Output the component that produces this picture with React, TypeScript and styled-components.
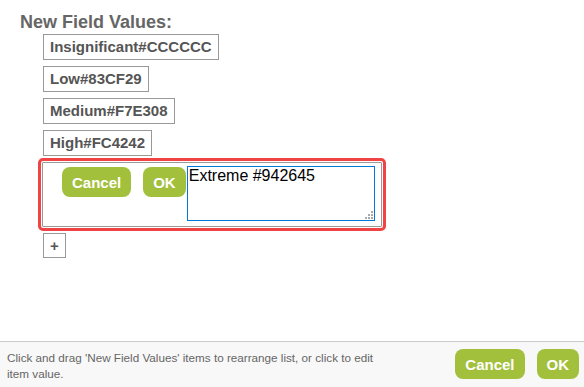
import React, { useState } from "react";
import styled, { createGlobalStyle } from "styled-components";

const GlobalStyle = createGlobalStyle`
  html, body { margin: 0; padding: 0; background: #fff; }
  body { font-family: "Liberation Sans", Arial, sans-serif; }
  * { box-sizing: border-box; }
`;

const Page = styled.div`
  display: flex;
  flex-direction: column;
  height: 100vh;
`;

const Main = styled.div`
  flex: 1;
  padding: 11px 0 0 20px;
`;

const Heading = styled.div`
  font-size: 18px;
  font-weight: bold;
  color: #666;
  line-height: 22px;
`;

const List = styled.div`
  display: flex;
  flex-direction: column;
  align-items: flex-start;
  padding: 1px 0 0 23px;
`;

const Item = styled.div`
  border: 1px solid #999;
  padding: 3px 6px;
  font-size: 15px;
  line-height: 18px;
  font-weight: bold;
  color: #555;
  margin-bottom: 6px;
  cursor: pointer;
`;

const EditItem = styled.div`
  display: flex;
  align-items: flex-start;
  width: 340px;
  height: 65px;
  margin: 0 0 6px -1px;
  padding: 3px 7px 0 7px;
  border: 1px solid #999;
  outline: 3px solid #f04444;
  outline-offset: 1px;
  border-radius: 1px;
`;

const Button = styled.button<{ $gap?: number }>`
  flex-shrink: 0;
  height: 30px;
  padding: 0 10px;
  margin-left: ${(p) => p.$gap ?? 0}px;
  border: none;
  border-radius: 8px;
  background: #a2c03b;
  color: #fff;
  font-family: "Liberation Sans", Arial, sans-serif;
  font-size: 15px;
  font-weight: bold;
  cursor: pointer;
`;

const EditButton = styled(Button)`
  margin-top: 1px;
`;

const TextWrap = styled.div`
  position: relative;
  flex-shrink: 0;
  width: 188px;
  height: 55px;
  margin-left: 1px;
`;

const TextArea = styled.textarea`
  display: block;
  width: 100%;
  height: 100%;
  margin: 0;
  padding: 0 1px;
  border: 1px solid #0078d7;
  outline: none;
  resize: none;
  font-family: "Liberation Sans", Arial, sans-serif;
  font-size: 16px;
  color: #000;
`;

const Grip = styled.svg`
  position: absolute;
  right: 2px;
  bottom: 2px;
  width: 8px;
  height: 8px;
  pointer-events: none;
`;

const AddButton = styled.div`
  width: 23px;
  height: 25px;
  border: 1px solid #999;
  display: flex;
  align-items: center;
  justify-content: center;
  font-size: 15px;
  font-weight: bold;
  color: #555;
  cursor: pointer;
`;

const Footer = styled.div`
  display: flex;
  align-items: flex-start;
  border-top: 1px solid #ccc;
  background: #f8f8f8;
  height: 46px;
  padding: 7px 5px 0 7px;
`;

const FooterText = styled.div`
  flex: 1;
  max-width: 380px;
  font-size: 11.7px;
  line-height: 16px;
  color: #666;
  padding-top: 1px;
`;

const FooterButtons = styled.div`
  margin-left: auto;
  display: flex;
  gap: 12px;
`;

const values = [
  "Insignificant#CCCCCC",
  "Low#83CF29",
  "Medium#F7E308",
  "High#FC4242",
];

const gripDots: [number, number][] = [
  [6, 0],
  [3, 3],
  [6, 3],
  [0, 6],
  [3, 6],
  [6, 6],
];

export default function App() {
  const [text, setText] = useState("Extreme #942645");
  return (
    <Page>
      <GlobalStyle />
      <Main>
        <Heading>New Field Values:</Heading>
        <List>
          {values.map((v) => (
            <Item key={v}>{v}</Item>
          ))}
          <EditItem>
            <EditButton $gap={12}>Cancel</EditButton>
            <EditButton $gap={12}>OK</EditButton>
            <TextWrap>
              <TextArea value={text} onChange={(e) => setText(e.target.value)} />
              <Grip viewBox="0 0 8 8">
                {gripDots.map(([x, y]) => (
                  <rect key={`${x}-${y}`} x={x} y={y} width="2" height="2" fill="#aaa" />
                ))}
              </Grip>
            </TextWrap>
          </EditItem>
          <AddButton>+</AddButton>
        </List>
      </Main>
      <Footer>
        <FooterText>
          Click and drag 'New Field Values' items to rearrange list, or click to edit item value.
        </FooterText>
        <FooterButtons>
          <Button>Cancel</Button>
          <Button>OK</Button>
        </FooterButtons>
      </Footer>
    </Page>
  );
}
